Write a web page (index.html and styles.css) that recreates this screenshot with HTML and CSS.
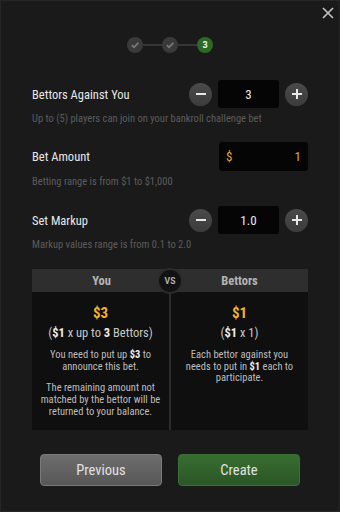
FILE: index.html
```html
<!DOCTYPE html>
<html>
<head>
<meta charset="utf-8">
<link rel="stylesheet" href="styles.css">
</head>
<body>
<div class="dialog">
  <button class="close" aria-label="Close">
    <svg width="12" height="12" viewBox="0 0 12 12"><path d="M1 1 L11 11 M11 1 L1 11" stroke="#c4c4c4" stroke-width="1.6" fill="none"/></svg>
  </button>

  <div class="stepper">
    <span class="step done"><svg width="10" height="10" viewBox="0 0 10 10"><path d="M1.8 5.2 L4 7.3 L8.3 2.8" stroke="#7a7a7a" stroke-width="1.7" fill="none"/></svg></span>
    <span class="link"></span>
    <span class="step done"><svg width="10" height="10" viewBox="0 0 10 10"><path d="M1.8 5.2 L4 7.3 L8.3 2.8" stroke="#7a7a7a" stroke-width="1.7" fill="none"/></svg></span>
    <span class="link"></span>
    <span class="step active">3</span>
  </div>

  <div class="field f1">
    <div class="row">
      <span class="label">Bettors Against You</span>
      <div class="spinner">
        <span class="round"><svg width="12" height="12" viewBox="0 0 12 12"><path d="M1 6 H11" stroke="#e8e8e8" stroke-width="2"/></svg></span>
        <span class="box">3</span>
        <span class="round"><svg width="12" height="12" viewBox="0 0 12 12"><path d="M1 6 H11 M6 1 V11" stroke="#e8e8e8" stroke-width="2"/></svg></span>
      </div>
    </div>
    <p class="hint">Up to (5) players can join on your bankroll challenge bet</p>
  </div>

  <div class="field f2">
    <div class="row">
      <span class="label">Bet Amount</span>
      <div class="money"><span class="cur">$</span><span class="amt">1</span></div>
    </div>
    <p class="hint">Betting range is from $1 to $1,000</p>
  </div>

  <div class="field f3">
    <div class="row">
      <span class="label">Set Markup</span>
      <div class="spinner">
        <span class="round"><svg width="12" height="12" viewBox="0 0 12 12"><path d="M1 6 H11" stroke="#e8e8e8" stroke-width="2"/></svg></span>
        <span class="box">1.0</span>
        <span class="round"><svg width="12" height="12" viewBox="0 0 12 12"><path d="M1 6 H11 M6 1 V11" stroke="#e8e8e8" stroke-width="2"/></svg></span>
      </div>
    </div>
    <p class="hint">Markup values range is from 0.1 to 2.0</p>
  </div>

  <div class="card">
    <div class="col">
      <div class="head">You</div>
      <div class="body">
        <div class="big">$3</div>
        <div class="calc">(<b>$1</b> x up to <b>3</b> Bettors)</div>
        <p class="desc">You need to put up <b>$3</b> to<br>announce this bet.</p>
        <p class="desc">The remaining amount not<br>matched by the bettor will be<br>returned to your balance.</p>
      </div>
    </div>
    <div class="col">
      <div class="head">Bettors</div>
      <div class="body">
        <div class="big">$1</div>
        <div class="calc">(<b>$1</b> x 1)</div>
        <p class="desc">Each bettor against you<br>needs to put in <b>$1</b> each to<br>participate.</p>
      </div>
    </div>
    <span class="vs">VS</span>
  </div>

  <div class="actions">
    <button class="btn prev">Previous</button>
    <button class="btn create">Create</button>
  </div>
</div>
</body>
</html>
```

FILE: styles.css
```css
* { box-sizing: border-box; }
html, body { margin: 0; padding: 0; }
body {
  background: #1a1a1a;
  font-family: "Roboto Condensed", "Liberation Sans Narrow", "DejaVu Sans Condensed", Roboto, sans-serif;
  color: #e4e4e4;
}
.dialog {
  position: relative;
  width: 340px;
  height: 512px;
  border: 1px solid #262626;
  padding: 36px 31px 0;
}
.close {
  position: absolute;
  top: 6px;
  right: 5px;
  background: none;
  border: 0;
  padding: 0;
  width: 12px;
  height: 12px;
  display: flex;
}
.stepper {
  display: flex;
  justify-content: center;
  align-items: center;
  height: 16px;
}
.step {
  width: 16px;
  height: 16px;
  border-radius: 50%;
  display: flex;
  align-items: center;
  justify-content: center;
}
.step.done { background: #3a3a3a; }
.step.active {
  background: #2b6a24;
  color: #f2f2f2;
  font-family: Roboto, sans-serif;
  font-weight: 700;
  font-size: 9px;
}
.link { width: 19px; height: 2px; background: #363636; }

.field { display: flex; flex-direction: column; }
.f1 { margin-top: 27px; }
.f2 { margin-top: 16px; }
.f3 { margin-top: 17px; }
.row {
  display: flex;
  align-items: center;
  justify-content: space-between;
}
.label { font-size: 12.5px; color: #e8e8e8; }
.hint {
  margin: 4px 0 0;
  font-size: 10.5px;
  line-height: 14px;
  color: #5c5c5c;
}
.spinner { display: flex; align-items: center; gap: 6px; }
.round {
  width: 23px;
  height: 23px;
  border-radius: 50%;
  background: linear-gradient(#4a4a4a, #3c3c3c);
  display: flex;
  align-items: center;
  justify-content: center;
}
.box {
  width: 61px;
  height: 28px;
  background: #050505;
  border-radius: 3px;
  display: flex;
  align-items: center;
  justify-content: center;
  font-size: 13px;
  color: #e8e8e8;
}
.money {
  width: 89px;
  height: 29px;
  background: #050505;
  border-radius: 3px;
  display: flex;
  align-items: center;
  justify-content: space-between;
  padding: 0 7px;
  font-size: 13px;
  color: #e0aa2a;
}

.card {
  position: relative;
  margin-top: 17px;
  height: 161px;
  display: grid;
  grid-template-columns: 1fr 1fr;
  gap: 2px;
  background: #2c2c2c;
}
.col { display: flex; flex-direction: column; background: #0f0f0f; }
.head {
  height: 23px;
  background: #2e2e2e;
  display: flex;
  align-items: center;
  justify-content: center;
  font-weight: 700;
  font-size: 12.5px;
  color: #b4b4b4;
}
.col:first-child .head { margin-right: -2px; }
.body {
  flex: 1;
  display: flex;
  flex-direction: column;
  align-items: center;
  text-align: center;
  padding: 12px 2px 0;
}
.big { font-weight: 700; font-size: 15px; line-height: 18px; color: #efb52c; }
.calc { margin-top: 3px; font-size: 12.5px; line-height: 16px; color: #c8c8c8; }
.calc b { color: #ececec; }
.desc {
  margin: 8px 0 0;
  font-size: 10.5px;
  line-height: 11.7px;
  color: #bdbdbd;
  white-space: nowrap;
}
.desc + .desc { margin-top: 10px; }
.desc b { color: #ececec; }
.vs {
  position: absolute;
  left: 50%;
  top: -1px;
  margin-left: -13px;
  width: 26px;
  height: 26px;
  border-radius: 50%;
  background: #121212;
  border: 2px solid #2c2c2c;
  display: flex;
  align-items: center;
  justify-content: center;
  font-family: Roboto, sans-serif;
  font-weight: 700;
  font-size: 8.5px;
  color: #b0b0b0;
}

.actions {
  margin-top: 24px;
  display: flex;
  justify-content: center;
  gap: 16px;
}
.btn {
  width: 122px;
  height: 32px;
  border-radius: 4px;
  font-family: inherit;
  font-size: 14.5px;
  color: #e2e2e2;
  padding: 0;
}
.prev {
  background: linear-gradient(#6d6d6d, #575757);
  border: 1px solid #7a7a7a;
}
.create {
  background: linear-gradient(#376d31, #2b5626);
  border: 1px solid #3b6f35;
}
```
